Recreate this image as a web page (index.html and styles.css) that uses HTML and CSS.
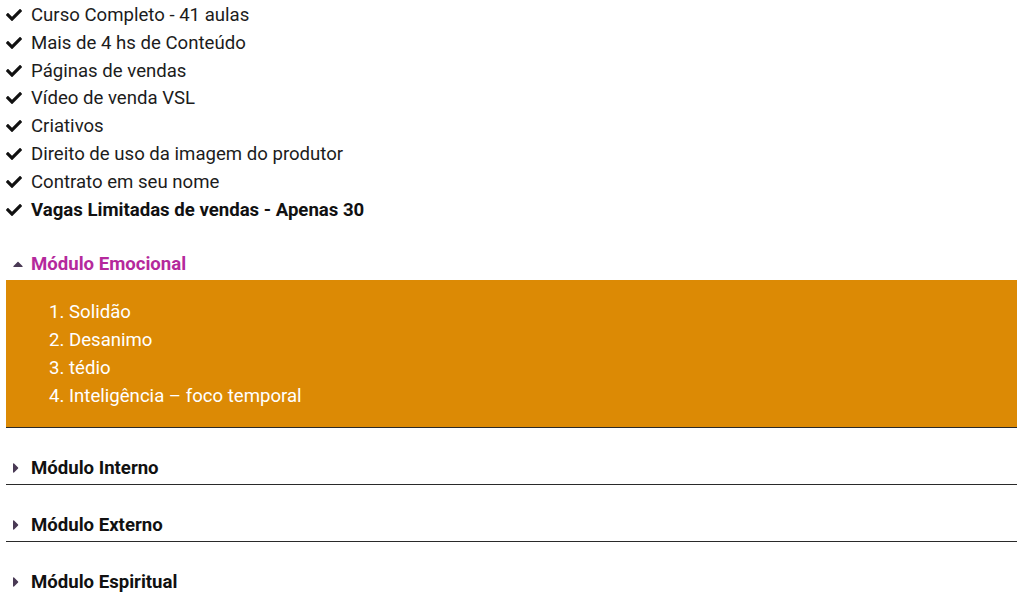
FILE: index.html
```html
<!DOCTYPE html>
<html>
<head>
    <link rel="stylesheet" href="styles.css">
</head>
<body>
    <div class="page">
        <ul class="check-list">
            <li><svg class="check" viewBox="0 0 512 512"><path d="M173.9 439.4l-166.4-166.4c-10-10-10-26.2 0-36.2l36.2-36.2c10-10 26.2-10 36.2 0L192 312.7 432.1 72.6c10-10 26.2-10 36.2 0l36.2 36.2c10 10 10 26.2 0 36.2l-294.4 294.4c-10 10-26.2 10-36.2 0z"/></svg>Curso Completo - 41 aulas</li>
            <li><svg class="check" viewBox="0 0 512 512"><path d="M173.9 439.4l-166.4-166.4c-10-10-10-26.2 0-36.2l36.2-36.2c10-10 26.2-10 36.2 0L192 312.7 432.1 72.6c10-10 26.2-10 36.2 0l36.2 36.2c10 10 10 26.2 0 36.2l-294.4 294.4c-10 10-26.2 10-36.2 0z"/></svg>Mais de 4 hs de Conteúdo</li>
            <li><svg class="check" viewBox="0 0 512 512"><path d="M173.9 439.4l-166.4-166.4c-10-10-10-26.2 0-36.2l36.2-36.2c10-10 26.2-10 36.2 0L192 312.7 432.1 72.6c10-10 26.2-10 36.2 0l36.2 36.2c10 10 10 26.2 0 36.2l-294.4 294.4c-10 10-26.2 10-36.2 0z"/></svg>Páginas de vendas</li>
            <li><svg class="check" viewBox="0 0 512 512"><path d="M173.9 439.4l-166.4-166.4c-10-10-10-26.2 0-36.2l36.2-36.2c10-10 26.2-10 36.2 0L192 312.7 432.1 72.6c10-10 26.2-10 36.2 0l36.2 36.2c10 10 10 26.2 0 36.2l-294.4 294.4c-10 10-26.2 10-36.2 0z"/></svg>Vídeo de venda VSL</li>
            <li><svg class="check" viewBox="0 0 512 512"><path d="M173.9 439.4l-166.4-166.4c-10-10-10-26.2 0-36.2l36.2-36.2c10-10 26.2-10 36.2 0L192 312.7 432.1 72.6c10-10 26.2-10 36.2 0l36.2 36.2c10 10 10 26.2 0 36.2l-294.4 294.4c-10 10-26.2 10-36.2 0z"/></svg>Criativos</li>
            <li><svg class="check" viewBox="0 0 512 512"><path d="M173.9 439.4l-166.4-166.4c-10-10-10-26.2 0-36.2l36.2-36.2c10-10 26.2-10 36.2 0L192 312.7 432.1 72.6c10-10 26.2-10 36.2 0l36.2 36.2c10 10 10 26.2 0 36.2l-294.4 294.4c-10 10-26.2 10-36.2 0z"/></svg>Direito de uso da imagem do produtor</li>
            <li><svg class="check" viewBox="0 0 512 512"><path d="M173.9 439.4l-166.4-166.4c-10-10-10-26.2 0-36.2l36.2-36.2c10-10 26.2-10 36.2 0L192 312.7 432.1 72.6c10-10 26.2-10 36.2 0l36.2 36.2c10 10 10 26.2 0 36.2l-294.4 294.4c-10 10-26.2 10-36.2 0z"/></svg>Contrato em seu nome</li>
            <li class="strong"><svg class="check" viewBox="0 0 512 512"><path d="M173.9 439.4l-166.4-166.4c-10-10-10-26.2 0-36.2l36.2-36.2c10-10 26.2-10 36.2 0L192 312.7 432.1 72.6c10-10 26.2-10 36.2 0l36.2 36.2c10 10 10 26.2 0 36.2l-294.4 294.4c-10 10-26.2 10-36.2 0z"/></svg>Vagas Limitadas de vendas - Apenas 30</li>
        </ul>

        <div class="accordion">
            <div class="acc-item open">
                <div class="acc-title">
                    <svg class="caret" viewBox="0 0 320 512"><path d="M288.7 352H31.3c-17.8 0-26.7-21.5-14.1-34.1l128.7-128.7c7.8-7.8 20.5-7.8 28.3 0l128.7 128.7c12.6 12.6 3.7 34.1-14.2 34.1z"/></svg>
                    <span>Módulo Emocional</span>
                </div>
                <div class="acc-content">
                    <ol>
                        <li>Solidão</li>
                        <li>Desanimo</li>
                        <li>tédio</li>
                        <li>Inteligência – foco temporal</li>
                    </ol>
                </div>
            </div>
            <div class="acc-item">
                <div class="acc-title">
                    <svg class="caret" viewBox="0 0 192 512"><path d="M0 384.7V127.3c0-17.8 21.5-26.7 34.1-14.1l128.7 128.7c7.8 7.8 7.8 20.5 0 28.3L34.1 398.8C21.5 411.4 0 402.5 0 384.7z"/></svg>
                    <span>Módulo Interno</span>
                </div>
            </div>
            <div class="acc-item">
                <div class="acc-title">
                    <svg class="caret" viewBox="0 0 192 512"><path d="M0 384.7V127.3c0-17.8 21.5-26.7 34.1-14.1l128.7 128.7c7.8 7.8 7.8 20.5 0 28.3L34.1 398.8C21.5 411.4 0 402.5 0 384.7z"/></svg>
                    <span>Módulo Externo</span>
                </div>
            </div>
            <div class="acc-item last">
                <div class="acc-title">
                    <svg class="caret" viewBox="0 0 192 512"><path d="M0 384.7V127.3c0-17.8 21.5-26.7 34.1-14.1l128.7 128.7c7.8 7.8 7.8 20.5 0 28.3L34.1 398.8C21.5 411.4 0 402.5 0 384.7z"/></svg>
                    <span>Módulo Espiritual</span>
                </div>
            </div>
        </div>
    </div>
</body>
</html>
```

FILE: styles.css
```css
body {
    margin: 0;
    background-color: #ffffff;
    font-family: Roboto, "Liberation Sans", sans-serif;
    color: #1c1c1c;
}

.page {
    padding: 1px 7px 0 6px;
}

.check-list {
    list-style: none;
    margin: 0;
    padding: 0;
}

.check-list li {
    display: flex;
    align-items: center;
    height: 27.85px;
    font-size: 18.6px;
}

.check-list li.strong {
    font-weight: bold;
    color: #111;
}

.check {
    width: 16px;
    height: 16px;
    margin-right: 9px;
    fill: #111;
}

.accordion {
    margin-top: 22px;
}

.acc-item {
    border-bottom: 1px solid #2a2a2a;
    margin-top: 22px;
}

.acc-item:first-child {
    margin-top: 0;
}

.acc-item.last {
    border-bottom: none;
}

.acc-title {
    display: flex;
    align-items: center;
    height: 31px;
    padding-top: 3px;
    font-size: 18.6px;
    font-weight: bold;
    color: #111;
}

.caret {
    height: 16px;
    width: 10px;
    fill: #4a3a55;
    margin-left: 7px;
    margin-right: 8px;
}

.acc-item:not(.open) .caret {
    width: 6px;
    margin-right: 12px;
}

.acc-item.open .acc-title {
    color: #b5299c;
}

.acc-content {
    background-color: #dc8a05;
    color: #ffffff;
    padding: 18px 0 17px;
}

.acc-content ol {
    margin: 0;
    padding-left: 63px;
    font-size: 18.6px;
}

.acc-content li {
    line-height: 28px;
}
```
